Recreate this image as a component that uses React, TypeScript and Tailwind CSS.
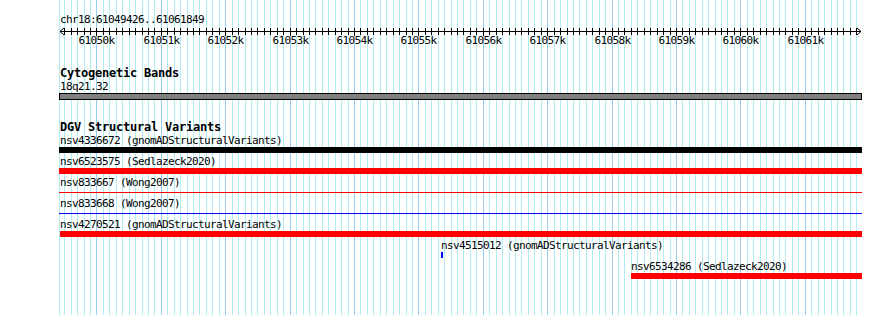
const START = 61049426;
const END = 61061849;
const LEFT = 60;
const SCALE = 800 / (END - START + 1);

const px = (bp: number) => LEFT + (bp - START) * SCALE;

type Variant = {
  name: string;
  source: string;
  color: string;
  x: number;
  w: number;
  thin?: boolean;
};

const variants: Variant[] = [
  { name: "nsv4336672", source: "gnomADStructuralVariants", color: "#000000", x: 59, w: 803 },
  { name: "nsv6523575", source: "Sedlazeck2020", color: "#ff0000", x: 59, w: 803 },
  { name: "nsv833667", source: "Wong2007", color: "#ff0000", x: 59, w: 803, thin: true },
  { name: "nsv833668", source: "Wong2007", color: "#0000ff", x: 59, w: 803, thin: true },
  { name: "nsv4270521", source: "gnomADStructuralVariants", color: "#ff0000", x: 60, w: 802 },
  { name: "nsv4515012", source: "gnomADStructuralVariants", color: "#0000ff", x: 441, w: 2 },
  { name: "nsv6534286", source: "Sedlazeck2020", color: "#ff0000", x: 631, w: 231 },
];

const gridLines = Array.from({ length: 125 }, (_, i) => {
  const bp = 61049400 + i * 100;
  return { x: Math.max(59, Math.floor(px(bp))) + 0.5, major: bp % 1000 === 0 };
});

const majors = Array.from({ length: 12 }, (_, i) => 61050000 + i * 1000);

function Grid() {
  return (
    <svg className="absolute inset-0" width={890} height={315} shapeRendering="crispEdges">
      {gridLines.map((g) => (
        <line
          key={g.x}
          x1={g.x}
          x2={g.x}
          y1={0}
          y2={315}
          stroke={g.major ? "#99ccee" : "#b0ecf0"}
          strokeWidth={1}
        />
      ))}
    </svg>
  );
}

function Ruler() {
  return (
    <svg width={890} height={22} className="block" shapeRendering="crispEdges">
      <line x1={60} x2={861} y1={5.5} y2={5.5} stroke="#000" />
      <polyline points="64,2 60,5.5 64,9" fill="none" stroke="#000" shapeRendering="auto" />
      <polyline points="857,2 861,5.5 857,9" fill="none" stroke="#000" shapeRendering="auto" />
      {gridLines
        .filter((g) => g.x > 62 && g.x < 858)
        .map((g) => (
          <line key={g.x} x1={g.x} x2={g.x} y1={2} y2={g.major ? 10 : 9} stroke="#000" />
        ))}
      {majors.map((bp) => (
        <text
          key={bp}
          x={Math.floor(px(bp)) + 0.5}
          y={18}
          textAnchor="middle"
          fontFamily="DejaVu Sans Mono, monospace"
          fontSize={11}
          letterSpacing={-0.62}
          fill="#000"
        >
          {bp / 1000}k
        </text>
      ))}
    </svg>
  );
}

function VariantRow({ v }: { v: Variant }) {
  return (
    <div className="mb-[2px]">
      <div className="h-[13px] whitespace-pre leading-[13px]" style={{ marginLeft: Math.max(60, v.x) }}>
        {v.name} ({v.source})
      </div>
      <div className="flex h-[6px] items-center">
        <div
          className={v.thin ? "h-px" : "h-[6px]"}
          style={{ marginLeft: v.x, width: v.w, backgroundColor: v.color }}
        />
      </div>
    </div>
  );
}

export default function App() {
  return (
    <div className="relative h-[315px] w-[890px] overflow-hidden bg-white font-['DejaVu_Sans_Mono',monospace] text-[11px] tracking-[-0.62px] text-black">
      <Grid />
      <div className="relative pt-[13px]">
        <div className="ml-[60px] h-[13px] leading-[13px]">chr18:61049426..61061849</div>
        <Ruler />

        <div className="mt-[19px] ml-[60px] h-[13px] text-[12px] font-bold tracking-[-0.22px] leading-[13px]">
          Cytogenetic Bands
        </div>
        <div className="ml-[60px] h-[13px] leading-[13px]">18q21.32</div>
        <div className="ml-[59px] h-[7px] w-[803px] border border-black bg-[#808080]" />

        <div className="mt-[21px] ml-[60px] h-[13px] text-[12px] font-bold tracking-[-0.22px] leading-[13px]">
          DGV Structural Variants
        </div>
        {variants.map((v) => (
          <VariantRow key={v.name} v={v} />
        ))}
      </div>
    </div>
  );
}
